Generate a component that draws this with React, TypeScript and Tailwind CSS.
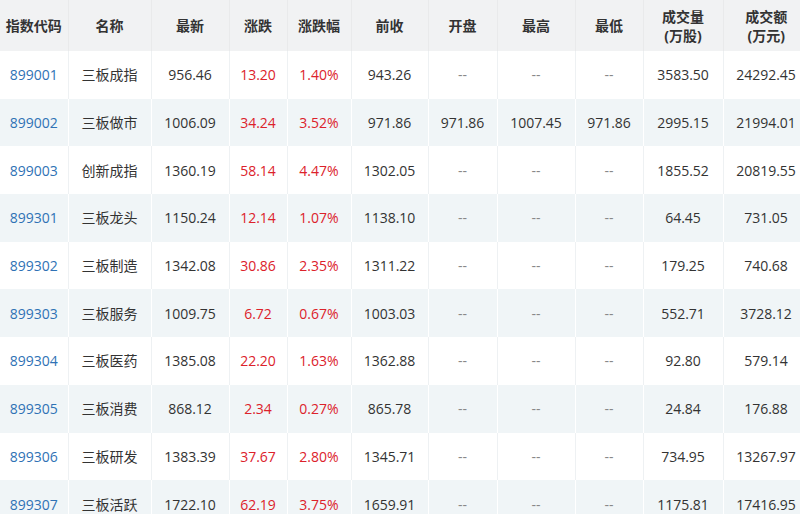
const rows = [
  ["899001", "三板成指", "956.46", "13.20", "1.40%", "943.26", "--", "--", "--", "3583.50", "24292.45"],
  ["899002", "三板做市", "1006.09", "34.24", "3.52%", "971.86", "971.86", "1007.45", "971.86", "2995.15", "21994.01"],
  ["899003", "创新成指", "1360.19", "58.14", "4.47%", "1302.05", "--", "--", "--", "1855.52", "20819.55"],
  ["899301", "三板龙头", "1150.24", "12.14", "1.07%", "1138.10", "--", "--", "--", "64.45", "731.05"],
  ["899302", "三板制造", "1342.08", "30.86", "2.35%", "1311.22", "--", "--", "--", "179.25", "740.68"],
  ["899303", "三板服务", "1009.75", "6.72", "0.67%", "1003.03", "--", "--", "--", "552.71", "3728.12"],
  ["899304", "三板医药", "1385.08", "22.20", "1.63%", "1362.88", "--", "--", "--", "92.80", "579.14"],
  ["899305", "三板消费", "868.12", "2.34", "0.27%", "865.78", "--", "--", "--", "24.84", "176.88"],
  ["899306", "三板研发", "1383.39", "37.67", "2.80%", "1345.71", "--", "--", "--", "734.95", "13267.97"],
  ["899307", "三板活跃", "1722.10", "62.19", "3.75%", "1659.91", "--", "--", "--", "1175.81", "17416.95"],
];

const widths = ["w-[68px]", "w-[83px]", "w-[78px]", "w-[58px]", "w-[64px]", "w-[77px]", "w-[69px]", "w-[78px]", "w-[68px]", "w-[80px]", "w-[86px]"];

export default function App() {
  return (
    <div className="w-[800px] h-[514px] overflow-hidden bg-white" style={{ fontFamily: '"Open Sans", "Noto Sans CJK SC", sans-serif' }}>
      <table className="table-fixed border-collapse w-[809px] text-[14px] text-[#333]">
        <colgroup>
          {widths.map((w, i) => (
            <col key={i} className={w} />
          ))}
        </colgroup>
        <thead>
          <tr className="h-[51px] bg-[#f1f2f3] font-bold text-[#333] leading-[19px]">
            <th className="border-r border-[#e9eaeb] font-bold">指数代码</th>
            <th className="border-r border-[#e9eaeb] font-bold">名称</th>
            <th className="border-r border-[#e9eaeb] font-bold">最新</th>
            <th className="border-r border-[#e9eaeb] font-bold">涨跌</th>
            <th className="border-r border-[#e9eaeb] font-bold">涨跌幅</th>
            <th className="border-r border-[#e9eaeb] font-bold">前收</th>
            <th className="border-r border-[#e9eaeb] font-bold">开盘</th>
            <th className="border-r border-[#e9eaeb] font-bold">最高</th>
            <th className="border-r border-[#e9eaeb] font-bold">最低</th>
            <th className="border-r border-[#e9eaeb] font-bold">成交量<br />(万股)</th>
            <th className="font-bold">成交额<br />(万元)</th>
          </tr>
        </thead>
        <tbody>
          {rows.map((r, i) => (
            <tr key={r[0]} className={i % 2 === 0 ? "h-[47.7px] bg-white" : "h-[47.7px] bg-[#f0f5f7]"}>
              {r.map((c, j) => (
                <td
                  key={j}
                  className={
                    "text-center border-r " +
                    (i % 2 === 0 ? "border-[#eef1f3] " : "border-white ") +
                    (j === 0 ? "text-[#2f72b5]" : j === 3 || j === 4 ? "text-[#dc222b]" : j >= 6 && j <= 8 && c === "--" ? "text-[#888]" : "text-[#333]")
                  }
                >
                  {c}
                </td>
              ))}
            </tr>
          ))}
        </tbody>
      </table>
    </div>
  );
}
